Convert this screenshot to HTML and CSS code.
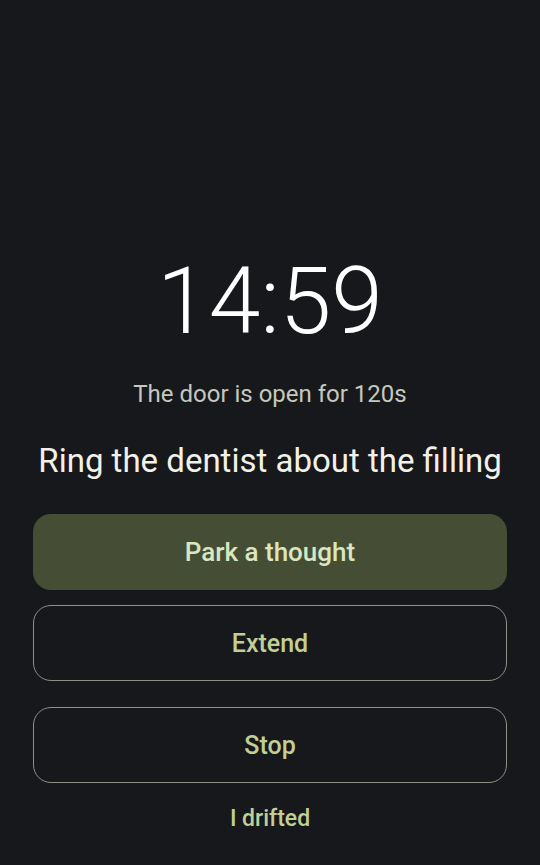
FILE: index.html
```html
<!DOCTYPE html>
<html lang="en">
<head>
    <meta charset="UTF-8">
    <meta name="viewport" content="width=device-width, initial-scale=1.0">
    <title>Focus Timer</title>
    <link rel="stylesheet" href="styles.css">
</head>
<body>

    <main class="session">
        <!-- Countdown -->
        <div class="timer">14:59</div>
        <p class="door-note">The door is open for 120s</p>
        <h1 class="task">Ring the dentist about the filling</h1>

        <div class="actions">
            <button class="btn btn-filled">Park a thought</button>
            <button class="btn btn-outline">Extend</button>
            <button class="btn btn-outline btn-stop">Stop</button>
            <button class="btn-text">I drifted</button>
        </div>
    </main>

</body>
</html>
```

FILE: styles.css
```css
* {
    margin: 0;
    padding: 0;
    box-sizing: border-box;
    font-family: Roboto, 'Noto Sans', sans-serif;
}

body {
    background: #17181c;
    color: #e3e3dc;
    min-height: 100vh;
}

.session {
    display: flex;
    flex-direction: column;
    align-items: center;
    padding: 255px 33px 0;
}

.timer {
    font-size: 93px;
    font-weight: 300;
    line-height: 1;
    color: #ffffff;
}

.door-note {
    margin-top: 32px;
    font-size: 24px;
    line-height: 28px;
    color: #c6c8bc;
}

.task {
    margin-top: 34px;
    font-size: 33px;
    font-weight: 400;
    line-height: 38px;
    color: #f1f1ea;
}

.actions {
    width: 100%;
    display: flex;
    flex-direction: column;
    align-items: center;
    margin-top: 34px;
}

.btn {
    width: 100%;
    height: 76px;
    border-radius: 18px;
    font-size: 25px;
    font-weight: 500;
    cursor: pointer;
}

.btn-filled {
    background: #454e35;
    color: #d9e6bf;
    border: none;
    font-size: 26px;
}

.btn-outline {
    background: transparent;
    color: #c0d095;
    border: 1px solid #8e9186;
    margin-top: 15px;
}

.btn-stop {
    margin-top: 26px;
}

.btn-text {
    margin-top: 22px;
    background: none;
    border: none;
    color: #c0d095;
    font-size: 23px;
    font-weight: 500;
    line-height: 28px;
    cursor: pointer;
}
```
